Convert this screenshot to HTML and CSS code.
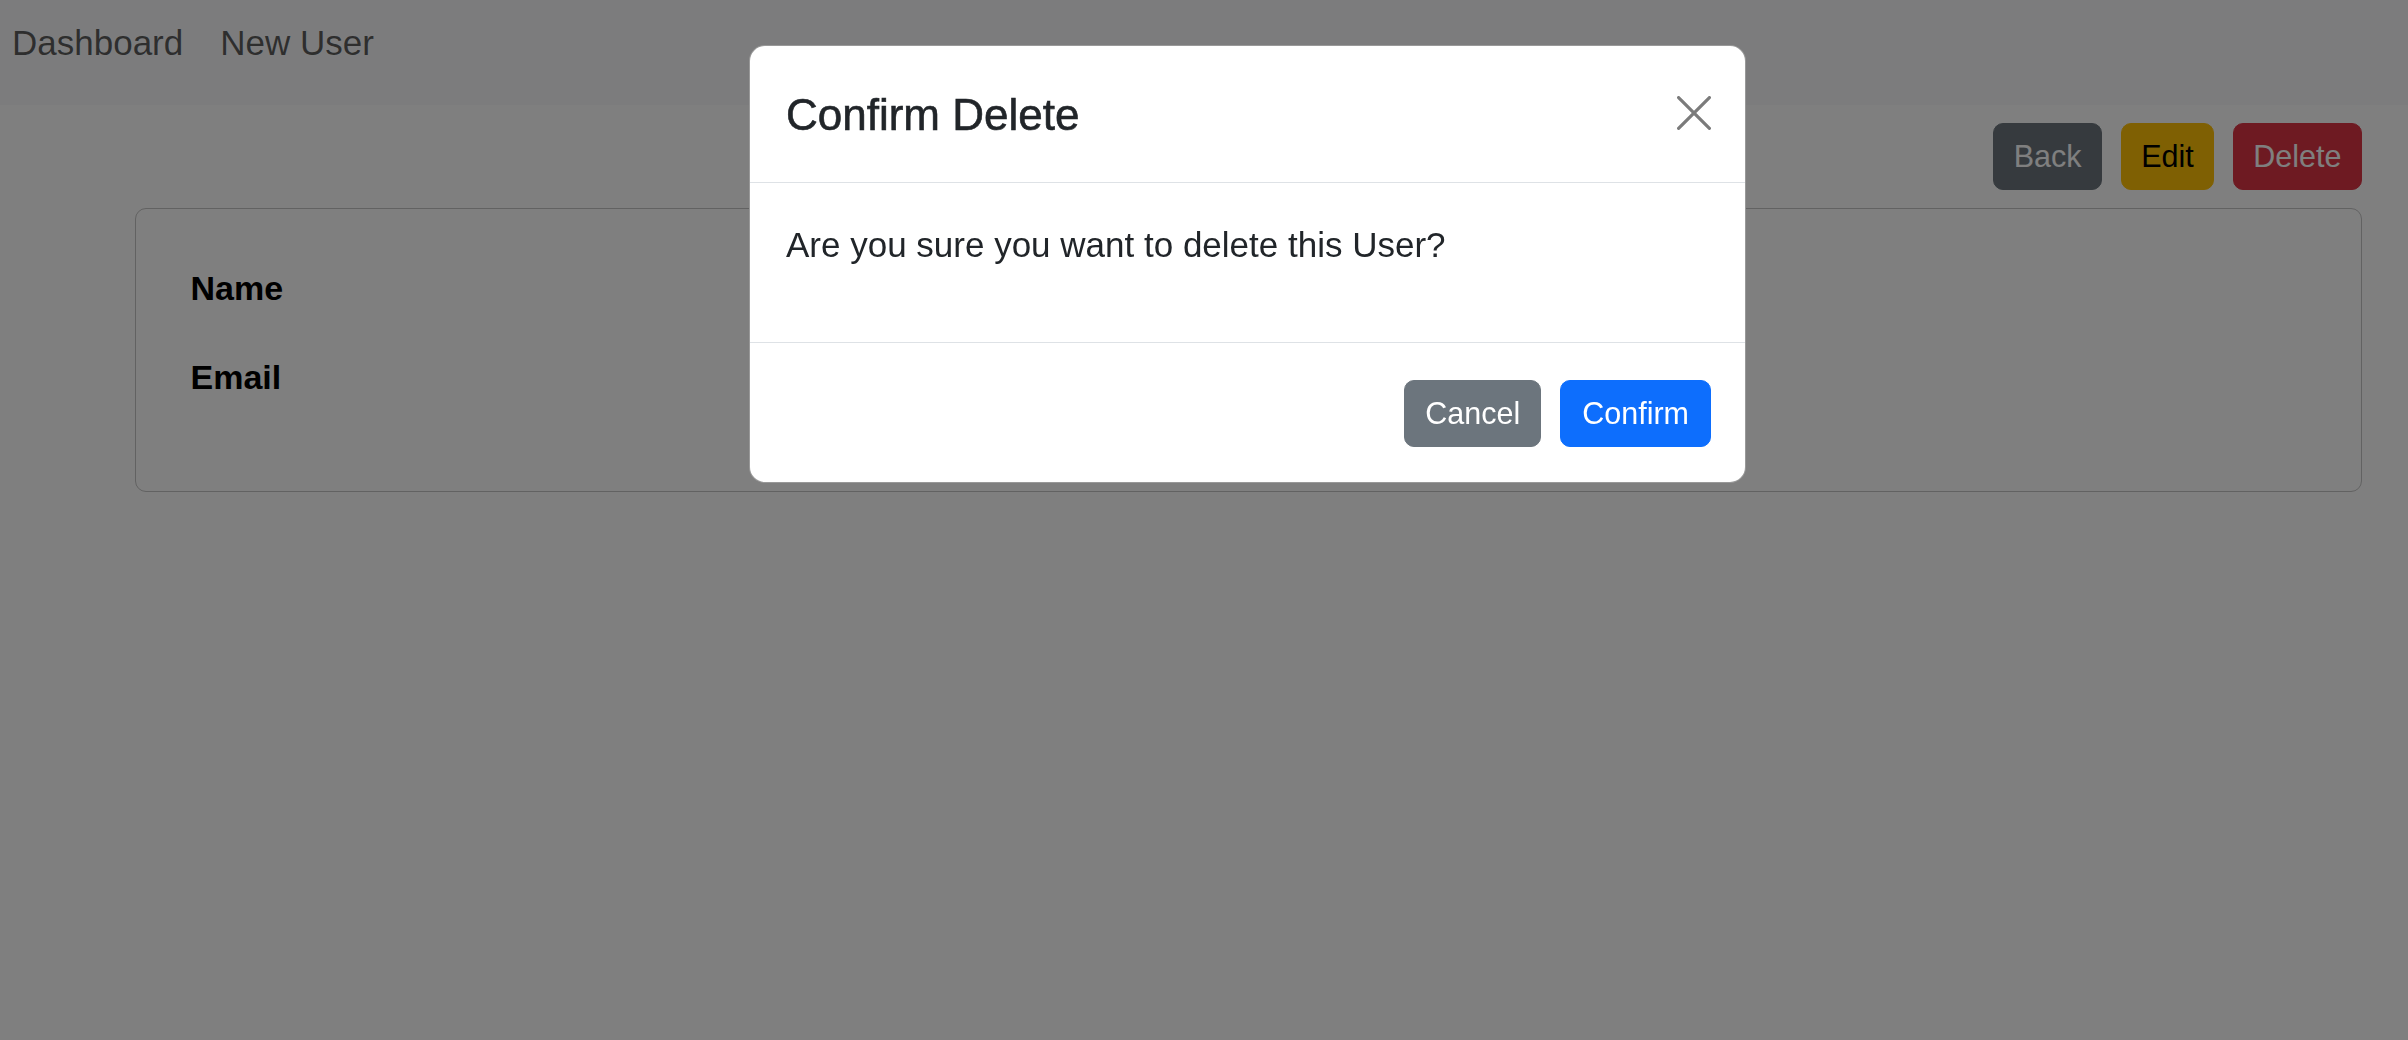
FILE: index.html
```html
<!DOCTYPE html>
<html lang="en">
<head>
<meta charset="utf-8">
<title>User</title>
<link rel="stylesheet" href="styles.css">
</head>
<body>
<nav class="navbar">
  <a class="nav-link" href="#">Dashboard</a>
  <a class="nav-link" href="#">New User</a>
</nav>
<main class="page">
  <div class="actions">
    <button class="btn btn-secondary">Back</button>
    <button class="btn btn-warning">Edit</button>
    <button class="btn btn-danger">Delete</button>
  </div>
  <section class="card">
    <div class="field"><span class="label">Name</span></div>
    <div class="field"><span class="label">Email</span></div>
  </section>
</main>
<div class="backdrop"></div>
<div class="modal-wrap">
  <div class="modal">
    <div class="modal-header">
      <h5 class="modal-title">Confirm Delete</h5>
      <button class="btn-close" aria-label="Close">
        <svg width="34" height="34" viewBox="0 0 34 34"><path d="M1.6 1.6 L32.4 32.4 M32.4 1.6 L1.6 32.4" stroke="#7b7b7b" stroke-width="3.2" stroke-linecap="round" fill="none"/></svg>
      </button>
    </div>
    <div class="modal-body">
      <p>Are you sure you want to delete this User?</p>
    </div>
    <div class="modal-footer">
      <button class="btn btn-secondary btn-cancel">Cancel</button>
      <button class="btn btn-primary btn-confirm">Confirm</button>
    </div>
  </div>
</div>
</body>
</html>
```
FILE: styles.css
```css
* { box-sizing: border-box; }
html, body { margin: 0; padding: 0; }
body {
  font-family: "Liberation Sans", Arial, sans-serif;
  background: #ffffff;
  color: #212529;
  width: 2408px;
  height: 1040px;
  overflow: hidden;
}
.navbar {
  height: 105px;
  background: #f8f9fa;
  display: flex;
  gap: 37px;
  padding: 17px 0 0 12px;
}
.nav-link {
  font-size: 35px;
  line-height: 1.5;
  color: rgba(0, 0, 0, 0.64);
  text-decoration: none;
}
.page {
  padding: 18px 46px 0 135px;
}
.actions {
  display: flex;
  justify-content: flex-end;
  gap: 18.6px;
}
.btn {
  font-family: "Liberation Sans", Arial, sans-serif;
  font-size: 30.5px;
  line-height: 45px;
  padding: 10px 19.5px;
  border: 1px solid transparent;
  border-radius: 10px;
  cursor: pointer;
}
.btn-secondary { background: #6c757d; border-color: #6c757d; color: #fff; }
.btn-warning { background: #ffc107; border-color: #ffc107; color: #000; }
.btn-danger { background: #dc3545; border-color: #dc3545; color: #fff; }
.btn-primary { background: #0d6efd; border-color: #0d6efd; color: #fff; }
.btn-cancel { padding: 10px 20px; }
.btn-confirm { padding: 10px 21px; }
.card {
  margin-top: 18px;
  border: 1.5px solid #c4c4c4;
  border-radius: 11px;
  height: 284px;
  padding: 54px 54.5px;
}
.field {
  margin-bottom: 37.5px;
}
.label {
  font-size: 34px;
  line-height: 1.5;
  font-weight: 700;
  color: #000;
}
.backdrop {
  position: fixed;
  inset: 0;
  background: rgba(0, 0, 0, 0.5);
}
.modal-wrap {
  position: fixed;
  inset: 0;
  padding: 45px 0 0 749px;
}
.modal {
  width: 997px;
  background: #fff;
  border: 1.5px solid rgba(0, 0, 0, 0.4);
  border-radius: 16px;
}
.modal-header {
  display: flex;
  align-items: center;
  justify-content: space-between;
  padding: 36px 34px 34px 36px;
  border-bottom: 1.5px solid #dee2e6;
}
.modal-title {
  margin: 0;
  font-size: 44px;
  line-height: 66px;
  font-weight: 500;
  color: #212529;
  -webkit-text-stroke: 0.6px #212529;
}
.btn-close {
  width: 34px;
  height: 34px;
  padding: 0;
  border: 0;
  background: transparent;
  display: flex;
  margin-top: -4px;
}
.modal-body {
  padding: 36px;
}
.modal-body p {
  margin: 0 0 34px;
  font-size: 35px;
  line-height: 1.5;
}
.modal-footer {
  display: flex;
  justify-content: flex-end;
  gap: 19px;
  padding: 37px 34px 35px;
  border-top: 1.5px solid #dee2e6;
}
```
